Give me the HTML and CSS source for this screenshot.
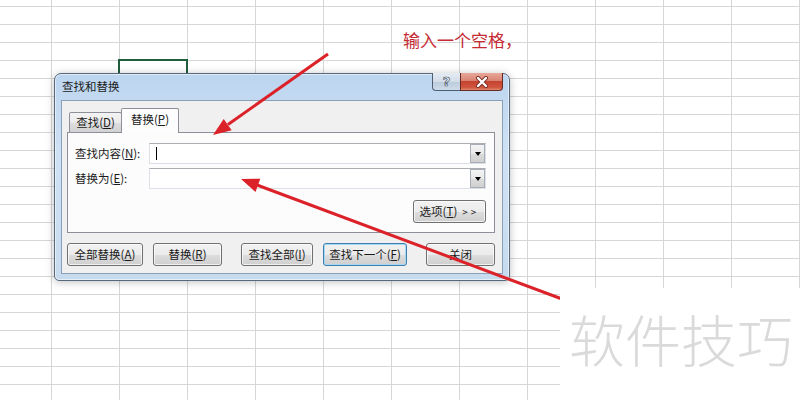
FILE: index.html
```html
<!DOCTYPE html>
<html lang="zh-CN">
<head>
<meta charset="utf-8">
<title>查找和替换</title>
<link rel="stylesheet" href="styles.css">
</head>
<body>
<div class="sheet">
  <div class="cell-sel"></div>

  <div class="note">输入一个空格，</div>

  <div class="dialog">
    <div class="titlebar">
      <span class="title">查找和替换</span>
      <div class="tb-btns">
        <span class="tb-help">?</span>
        <span class="tb-close">
          <svg width="14" height="12" viewBox="0 0 14 12"><path d="M3 2 L11 10 M11 2 L3 10" stroke="#7a2a22" stroke-width="4" stroke-linecap="round"/><path d="M3 2 L11 10 M11 2 L3 10" stroke="#fff" stroke-width="2.4" stroke-linecap="round"/></svg>
        </span>
      </div>
    </div>
    <div class="client">
      <div class="tabs">
        <div class="tab">查找(<u>D</u>)</div>
        <div class="tab active">替换(<u>P</u>)</div>
      </div>
      <div class="panel">
        <div class="row">
          <span class="label">查找内容(<u>N</u>):</span>
          <div class="combo"><span class="field"><span class="caret"></span></span><span class="dd"><span class="tri"></span></span></div>
        </div>
        <div class="row row2">
          <span class="label">替换为(<u>E</u>):</span>
          <div class="combo"><span class="field"></span><span class="dd"><span class="tri"></span></span></div>
        </div>
        <div class="opts">
          <span class="btn btn-opts">选项(<u>T</u>) <span class="gt">&gt;&gt;</span></span>
        </div>
      </div>
      <div class="actions">
        <span class="btn b1">全部替换(<u>A</u>)</span>
        <span class="btn b2">替换(<u>R</u>)</span>
        <span class="btn b3">查找全部(<u>I</u>)</span>
        <span class="btn b4 default">查找下一个(<u>F</u>)</span>
        <span class="btn b5">关闭</span>
      </div>
    </div>
  </div>

  <svg class="arrows" width="800" height="400" viewBox="0 0 800 400">
    <line x1="328" y1="54" x2="228" y2="124.5" stroke="#dc2229" stroke-width="3"/>
    <polygon points="213,135 231.7,130.3 223.7,118.9" fill="#dc2229"/>
    <line x1="562" y1="299" x2="257" y2="185" stroke="#dc2229" stroke-width="3"/>
    <polygon points="241,179 260.3,178.7 255.5,191.9" fill="#dc2229"/>
  </svg>

  <div class="wm"><span class="wm-text">软件技巧</span></div>
</div>
</body>
</html>
```

FILE: styles.css
```css
html, body {
  margin: 0;
  padding: 0;
}
body {
  width: 800px;
  height: 400px;
  overflow: hidden;
  font-family: "Noto Sans CJK SC", "Noto Sans", sans-serif;
  background: #fff;
}
.sheet {
  position: relative;
  width: 800px;
  height: 400px;
  background-color: #fff;
  background-image:
    linear-gradient(to right, #d6d6d6 1px, transparent 1px),
    linear-gradient(to bottom, #d6d6d6 1px, transparent 1px);
  background-size: 68px 18px;
  background-position: 51px 6px;
}
.cell-sel {
  position: absolute;
  left: 118px;
  top: 59px;
  width: 70px;
  height: 22px;
  border: 2px solid #1f5e3c;
  box-sizing: border-box;
}
.note {
  position: absolute;
  left: 403px;
  top: 31px;
  font-size: 17px;
  line-height: 1;
  color: #c52a33;
  white-space: nowrap;
}

/* dialog window */
.dialog {
  position: absolute;
  left: 54px;
  top: 73px;
  width: 456px;
  height: 208px;
  box-sizing: border-box;
  border: 1px solid #56687c;
  border-radius: 7px 7px 5px 5px;
  background: linear-gradient(to bottom, #bcd5ef 0%, #cfe2f5 40%, #c7dbef 100%);
  padding: 0 6px 6px 6px;
  box-shadow: 0 1px 8px rgba(0,0,0,0.25), inset 0 0 0 1px rgba(255,255,255,0.55);
  display: flex;
  flex-direction: column;
}
.titlebar {
  height: 26px;
  display: flex;
  justify-content: space-between;
  align-items: flex-start;
}
.title {
  align-self: center;
  margin-left: 1px;
  font-size: 11.5px;
  color: #1c1c1c;
  line-height: 1;
}
.tb-btns {
  display: flex;
  margin-top: -1px;
}
.tb-help, .tb-close {
  height: 18px;
  box-sizing: border-box;
  display: flex;
  align-items: center;
  justify-content: center;
  border: 1px solid #4e5f73;
  border-top: none;
}
.tb-help {
  width: 28px;
  border-radius: 0 0 0 4px;
  background: linear-gradient(to bottom, #e4ebf3 0%, #d3dde8 50%, #bccbdb 51%, #cddbea 100%);
  color: #f4f6f8;
  font-family: "DejaVu Sans", sans-serif;
  font-weight: bold;
  font-size: 13px;
  line-height: 1;
  -webkit-text-stroke: 0.7px #4a5a6d;
  border-right: none;
}
.tb-close {
  width: 43px;
  border-radius: 0 0 4px 0;
  background: linear-gradient(to bottom, #e8a798 0%, #d98575 45%, #c5432f 50%, #d0563f 85%, #e08a6c 100%);
  border-color: #6a2a24;
}

.client {
  flex: 1;
  background: #f0f0f0;
  border: 1px solid #8aa0b9;
  padding: 7px 7px 0 5px;
  box-sizing: border-box;
  display: flex;
  flex-direction: column;
}
.tabs {
  display: flex;
  align-items: flex-end;
  padding-left: 2px;
  font-size: 11.5px;
  color: #1a1a1a;
}
.tab {
  box-sizing: border-box;
  border: 1px solid #8d9099;
  border-bottom: none;
  border-radius: 2px 2px 0 0;
  display: flex;
  align-items: center;
  justify-content: center;
  line-height: 1;
}
.tab:first-child {
  width: 53px;
  height: 20px;
  background: linear-gradient(to bottom, #f3f3f3 0%, #ebebeb 50%, #dedede 51%, #d2d2d2 100%);
  margin-right: -1px;
  padding-top: 1px;
}
.tab.active {
  width: 58px;
  height: 25px;
  background: #fdfdfd;
  margin-bottom: -1px;
  position: relative;
  z-index: 1;
  padding-bottom: 2px;
}
.panel {
  height: 101px;
  box-sizing: border-box;
  border: 1px solid #8d9099;
  background: #fcfcfc;
  padding: 10px 8px 0 7px;
  display: flex;
  flex-direction: column;
}
.row {
  display: flex;
  align-items: center;
  height: 21px;
}
.row2 {
  margin-top: 4px;
}
.label {
  width: 74px;
  font-size: 11.5px;
  color: #1a1a1a;
  line-height: 1;
}
.combo {
  flex: 1;
  height: 21px;
  box-sizing: border-box;
  border: 1px solid #dbdfe6;
  border-top-color: #abadb3;
  background: #fff;
  display: flex;
}
.field {
  flex: 1;
  display: flex;
  align-items: center;
}
.caret {
  width: 1px;
  height: 13px;
  background: #000;
  margin-left: 6px;
}
.dd {
  width: 15px;
  box-sizing: border-box;
  border: 1px solid #a9adb5;
  background: linear-gradient(to bottom, #f4f4f4 0%, #e9e9e9 50%, #dcdcdc 51%, #d0d0d0 100%);
  display: flex;
  align-items: center;
  justify-content: center;
}
.tri {
  width: 0;
  height: 0;
  border-left: 3.5px solid transparent;
  border-right: 3.5px solid transparent;
  border-top: 4px solid #000;
}
.opts {
  display: flex;
  justify-content: flex-end;
  margin-top: 11px;
}

.btn {
  height: 23px;
  box-sizing: border-box;
  border: 1px solid #707070;
  border-radius: 3px;
  background: linear-gradient(to bottom, #f2f2f2 0%, #ebebeb 50%, #dddddd 51%, #cfcfcf 100%);
  box-shadow: inset 0 0 0 1px rgba(255,255,255,0.7);
  display: flex;
  align-items: center;
  justify-content: center;
  font-size: 11.5px;
  color: #1a1a1a;
  line-height: 1;
  white-space: nowrap;
}
.btn-opts {
  width: 73px;
}
.gt {
  letter-spacing: 3px;
  margin-left: 5px;
  font-size: 10px;
}
.actions {
  display: flex;
  margin-top: 10px;
}
.b1 { width: 76px; }
.b2 { width: 69px; margin-left: 10px; }
.b3 { width: 72px; margin-left: 19px; }
.b4 { width: 84px; margin-left: 10px; }
.b5 { width: 69px; margin-left: 19px; }
.btn.default {
  border-color: #3c7fb1;
  box-shadow: inset 0 0 0 1px #a7d7f3;
}

.arrows {
  position: absolute;
  left: 0;
  top: 0;
  pointer-events: none;
}

.wm {
  position: absolute;
  left: 560px;
  top: 288px;
  right: 0;
  bottom: 0;
  background: #fff;
}
.wm-text {
  position: absolute;
  left: 9px;
  top: 22px;
  font-size: 56px;
  font-weight: 300;
  line-height: 1;
  color: #dadada;
  white-space: nowrap;
}
```
